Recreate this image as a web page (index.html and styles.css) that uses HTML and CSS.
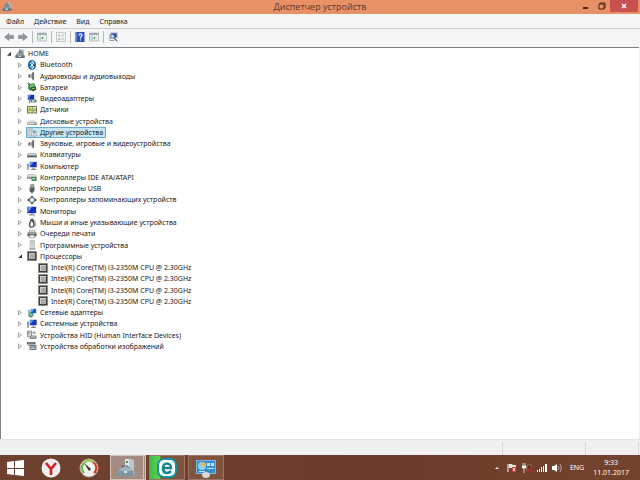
FILE: index.html
```html
<!DOCTYPE html>
<html lang="ru">
<head>
<meta charset="utf-8">
<title>Диспетчер устройств</title>
<link rel="stylesheet" href="styles.css">
</head>
<body>
<svg class="sprite" aria-hidden="true">
  <symbol id="pc" viewBox="0 0 20 20"><path d="M8 1h8l2 2v9H8z" fill="#b5babb"/><path d="M8 1h3v11H8z" fill="#80898a"/><path d="M12 4h4M12 7h4" stroke="#62696b"/><path d="M3 9h12l4 4v5H1v-5z" fill="#8c9799"/><path d="M1 13h18v5H1z" fill="#69777a"/><path d="M7 13h5v3H7z" fill="#c8d0d0"/><path d="M5 9l2-3h5l2 3" fill="none" stroke="#4e5b5f" stroke-width="1.5"/></symbol>
  <symbol id="bt" viewBox="0 0 20 20"><ellipse cx="10" cy="10" rx="8" ry="10" fill="#1769a5"/><path d="M6 6l8 8-4 4V2l4 4-8 8" fill="none" stroke="#fff" stroke-width="1.7"/></symbol>
  <symbol id="audio" viewBox="0 0 20 20"><path d="M3 7h4l7-6v18l-7-6H3z" fill="#a9a9a9"/><path d="M10 4l4-3v18l-4-3z" fill="#727272"/><path d="M3 7h3v6H3z" fill="#666"/><path d="M16 5v10" stroke="#ccc"/></symbol>
  <symbol id="battery" viewBox="0 0 20 20"><path d="M3 5l11-3 4 9-11 7-5-5z" fill="#36844b"/><path d="M5 6l8-2 2 4-9 3z" fill="#7dbd6e"/><path d="M8 12l9-3 2 6-8 4z" fill="#234b32"/><path d="M1 3l4 3M3 1l3 4" stroke="#555" stroke-width="2"/><path d="M10 14l6-2" stroke="#b3d45b" stroke-width="2"/></symbol>
  <symbol id="video" viewBox="0 0 20 20"><path d="M1 1h14v11H1z" fill="#9ba8c9"/><path d="M2 2h12v9H2z" fill="#1930b4"/><path d="M2 2h6l-4 6H2z" fill="#6687e3"/><path d="M7 11h12v6H7z" fill="#55886b"/><path d="M10 12h5v4h-5z" fill="#bcd0c1"/><path d="M5 9v10" stroke="#888" stroke-width="2"/></symbol>
  <symbol id="sensor" viewBox="0 0 20 20"><path d="M0 2h20v15H0z" fill="#6e7968"/><path d="M2 4h9v11H2z" fill="#d3df74"/><path d="M12 4h6v5h-6zM12 11h6v4h-6z" fill="#d8dfa5"/><path d="M3 12l3-5 3 4" fill="none" stroke="#597127" stroke-width="1.5"/></symbol>
  <symbol id="disk" viewBox="0 0 20 20"><path d="M4 9h12l4 5H0z" fill="#d5d5d5"/><path d="M0 13h20v5H0z" fill="#a0a4a4"/><path d="M1 14h18v2H1z" fill="#d2d5d5"/><path d="M15 15h3v2h-3z" fill="#467c54"/></symbol>
  <symbol id="unknown" viewBox="0 0 20 20"><path d="M2 1h8v17H2z" fill="#d7dddd" stroke="#808b8e"/><path d="M4 4h4M4 7h4" stroke="#8d9799"/><circle cx="14" cy="13" r="6" fill="#dce7ed" stroke="#75858e"/><path d="M12 11c0-3 5-2 4 0l-2 2v1M14 16v1" fill="none" stroke="#344e64" stroke-width="1.7"/></symbol>
  <symbol id="keyboard" viewBox="0 0 20 20"><path d="M3 6h14l3 3v6H0V9z" fill="#8c9190"/><path d="M3 7h14l2 3H1z" fill="#d4d8d6"/><path d="M2 13h16" stroke="#555c5a" stroke-width="2"/></symbol>
  <symbol id="computer" viewBox="0 0 20 20"><path d="M5 1h15v12H5z" fill="#9aabd1"/><path d="M6 2h13v10H6z" fill="#1935b9"/><path d="M6 2h7L8 9H6z" fill="#6c91e8"/><path d="M11 13h4v3h3v2H8v-2h3z" fill="#888"/><path d="M0 5h4v13H0z" fill="#a2abb4"/><path d="M1 8h2" stroke="#496078" stroke-width="2"/></symbol>
  <symbol id="ide" viewBox="0 0 20 20"><path d="M3 4h12l4 4v6H0V8z" fill="#9da3a2"/><path d="M3 5h12l3 4H1z" fill="#dfe2e2"/><path d="M9 10h10v8H9z" fill="#3f8857"/><path d="M11 12h5v3h-5z" fill="#b7d2bd"/></symbol>
  <symbol id="usb" viewBox="0 0 20 20"><path d="M7 1h7v6H7z" fill="#a6a6a6" stroke="#696969"/><path d="M5 7h10v6l-3 4H8l-3-3z" fill="#565a5b"/><path d="M10 16v4" stroke="#777" stroke-width="2"/><path d="M7 8v5" stroke="#aaa"/></symbol>
  <symbol id="storage" viewBox="0 0 20 20"><path d="M10 1l4 4H6zM10 19l-4-4h8zM0 10l5-4v8zM20 10l-5 4V6z" fill="#4b5052"/><circle cx="10" cy="10" r="5" fill="#f1f1f1" stroke="#5b6062" stroke-width="2"/></symbol>
  <symbol id="monitor" viewBox="0 0 20 20"><path d="M0 1h19v14H0z" fill="#a4b2d2"/><path d="M1 2h17v12H1z" fill="#1530bb"/><path d="M1 2h9L4 11H1z" fill="#6a91ec"/><path d="M8 15h4v2h4v2H4v-2h4z" fill="#7e8590"/></symbol>
  <symbol id="mouse" viewBox="0 0 20 20"><path d="M5 18C1 14 6 7 7 2l5-1c2 5 5 11 3 16-2 3-8 4-10 1z" fill="#53585a"/><path d="M7 16c-2-2 1-7 2-10 3 3 5 8 3 10-1 2-4 2-5 0z" fill="#eee"/><path d="M15 4l3 12" stroke="#92989a" stroke-width="2"/></symbol>
  <symbol id="printer" viewBox="0 0 20 20"><path d="M5 2h11v6H5z" fill="#d9dada" stroke="#848a8b"/><path d="M1 7h18v8H1z" fill="#565e60"/><path d="M3 9h14" stroke="#a9b0b1" stroke-width="2"/><path d="M5 12h10v6H5z" fill="#e9eaea" stroke="#767c7d"/></symbol>
  <symbol id="software" viewBox="0 0 20 20"><path d="M6 1h9v17H6z" fill="#d6d9d9" stroke="#a2a7a7"/><path d="M8 4h5M8 7h5" stroke="#9ca2a2"/><path d="M5 18h12" stroke="#888" stroke-width="2"/></symbol>
  <symbol id="cpu" viewBox="0 0 20 20"><path d="M1 1h18v18H1z" fill="#42413c"/><path d="M1 1h18v18H1z" fill="none" stroke="#777166" stroke-width="2" stroke-dasharray="1 1"/><path d="M4 4h12v12H4z" fill="#aaa9a6"/><path d="M4 4h12v2H6v10H4z" fill="#d0d0cc"/></symbol>
  <symbol id="network" viewBox="0 0 20 20"><path d="M2 4h11v9H2z" fill="#8db0d0"/><path d="M7 1h12v10H7z" fill="#abc4dc"/><path d="M8 2h10v8H8z" fill="#1b58bd"/><path d="M8 2h6l-4 6H8z" fill="#67afe6"/><circle cx="8" cy="14" r="5" fill="#409578"/><path d="M5 12l4 1 2 4" fill="none" stroke="#bbe0a3" stroke-width="2"/></symbol>
  <symbol id="hid" viewBox="0 0 20 20"><path d="M1 2h8v12H1z" fill="#e1e5e5" stroke="#677174" stroke-width="1.5"/><path d="M11 3h6v5h-6z" fill="#9ca7aa"/><path d="M6 11h13v7H6z" fill="#7d898c"/><path d="M8 13h9M8 16h9" stroke="#d9dfdf"/><path d="M4 4v5" stroke="#657073" stroke-width="2"/></symbol>
  <symbol id="imaging" viewBox="0 0 20 20"><path d="M0 2h17v5H0z" fill="#5d6668"/><path d="M2 4h13" stroke="#b9c1c2"/><path d="M5 8h14v10H5z" fill="#727c7f"/><path d="M7 12h10M7 15h10" stroke="#d3dadc" stroke-width="1.5"/><path d="M2 9h4" stroke="#999" stroke-width="2"/></symbol>
  <symbol id="back" viewBox="0 0 20 16"><path d="M1 8l9-7v4h9v6h-9v4z" fill="#939697" stroke="#777b7d"/></symbol>
  <symbol id="panel" viewBox="0 0 20 18"><path d="M1 1h18v16H1z" fill="#f5f7f5" stroke="#899097"/><path d="M1 1h18v4H1z" fill="#a4adb2"/><path d="M7 5v12M14 5v12M1 8h6M1 11h6M1 14h6" stroke="#a5adb0"/><path d="M8 11l4-3v6z" fill="#36a34e"/></symbol>
  <symbol id="props" viewBox="0 0 20 20"><path d="M1 1h18v18H1z" fill="#f2f4f2" stroke="#989da0"/><path d="M4 5h5v4H4zM4 12h5v4H4z" fill="#bac7bc"/><path d="M11 5h5M11 8h5M11 12h5M11 15h5" stroke="#a0a7ad"/></symbol>
  <symbol id="help" viewBox="0 0 18 20"><path d="M0 0h18v20H0z" fill="#2d50b8"/><path d="M0 0h3v20H0z" fill="#5f83d9"/><path d="M7 7c0-5 7-4 6 0-1 2-3 2-3 6M10 15v2" fill="none" stroke="#fff" stroke-width="2.3"/></symbol>
  <symbol id="scan" viewBox="0 0 20 20"><path d="M5 1h14v11H5z" fill="#9eabc8"/><path d="M7 3h10v8H7z" fill="#243da9"/><path d="M2 4h4v11H2z" fill="#b9bec5"/><circle cx="9" cy="9" r="4" fill="#bbd3ee" stroke="#59708e" stroke-width="1.5"/><path d="M12 12l6 6" stroke="#57616c" stroke-width="2.5"/><path d="M3 17h9" stroke="#999" stroke-width="2"/></symbol>
</svg>

<main class="window">
  <header class="titlebar">
    <svg class="icon app-icon"><use href="#pc"/></svg>
    <h1>Диспетчер устройств</h1>
    <div class="window-controls">
      <button aria-label="Свернуть"><svg viewBox="0 0 8 8"><path d="M2 5h5v2H2z"/></svg></button>
      <button aria-label="Восстановить"><svg viewBox="0 0 8 8"><path d="M2 2V1h5v5H6M1 2h5v5H1z" fill="none" stroke="#43281d"/></svg></button>
      <button class="close" aria-label="Закрыть"><svg viewBox="0 0 8 8"><path d="M2 2l4 4M6 2L2 6" stroke="#fff" stroke-width="1.4"/></svg></button>
    </div>
  </header>
  <nav class="menu"><button>Файл</button><button>Действие</button><button>Вид</button><button>Справка</button></nav>
  <div class="toolbar">
    <button aria-label="Назад"><svg class="icon"><use href="#back"/></svg></button>
    <button aria-label="Вперёд" class="forward"><svg class="icon"><use href="#back"/></svg></button>
    <i class="separator"></i>
    <button aria-label="Дерево консоли"><svg class="icon"><use href="#panel"/></svg></button>
    <i class="separator"></i>
    <button aria-label="Свойства"><svg class="icon"><use href="#props"/></svg></button>
    <i class="separator"></i>
    <button aria-label="Справка"><svg class="icon"><use href="#help"/></svg></button>
    <button aria-label="Область действий"><svg class="icon"><use href="#panel"/></svg></button>
    <i class="separator"></i>
    <button aria-label="Обновить конфигурацию"><svg class="icon"><use href="#scan"/></svg></button>
  </div>

  <section class="content">
    <ul class="tree" role="tree">
      <li class="root open" role="treeitem"><i class="twisty"></i><span class="item"><svg class="icon"><use href="#pc"/></svg>HOME</span></li>
      <li role="treeitem"><i class="twisty"></i><span class="item"><svg class="icon"><use href="#bt"/></svg>Bluetooth</span></li>
      <li role="treeitem"><i class="twisty"></i><span class="item"><svg class="icon"><use href="#audio"/></svg>Аудиовходы и аудиовыходы</span></li>
      <li role="treeitem"><i class="twisty"></i><span class="item"><svg class="icon"><use href="#battery"/></svg>Батареи</span></li>
      <li role="treeitem"><i class="twisty"></i><span class="item"><svg class="icon"><use href="#video"/></svg>Видеоадаптеры</span></li>
      <li role="treeitem"><i class="twisty"></i><span class="item"><svg class="icon"><use href="#sensor"/></svg>Датчики</span></li>
      <li role="treeitem"><i class="twisty"></i><span class="item"><svg class="icon"><use href="#disk"/></svg>Дисковые устройства</span></li>
      <li role="treeitem" aria-selected="true"><i class="twisty"></i><span class="item"><svg class="icon"><use href="#unknown"/></svg>Другие устройства</span></li>
      <li role="treeitem"><i class="twisty"></i><span class="item"><svg class="icon"><use href="#audio"/></svg>Звуковые, игровые и видеоустройства</span></li>
      <li role="treeitem"><i class="twisty"></i><span class="item"><svg class="icon"><use href="#keyboard"/></svg>Клавиатуры</span></li>
      <li role="treeitem"><i class="twisty"></i><span class="item"><svg class="icon"><use href="#computer"/></svg>Компьютер</span></li>
      <li role="treeitem"><i class="twisty"></i><span class="item"><svg class="icon"><use href="#ide"/></svg>Контроллеры IDE ATA/ATAPI</span></li>
      <li role="treeitem"><i class="twisty"></i><span class="item"><svg class="icon"><use href="#usb"/></svg>Контроллеры USB</span></li>
      <li role="treeitem"><i class="twisty"></i><span class="item"><svg class="icon"><use href="#storage"/></svg>Контроллеры запоминающих устройств</span></li>
      <li role="treeitem"><i class="twisty"></i><span class="item"><svg class="icon"><use href="#monitor"/></svg>Мониторы</span></li>
      <li role="treeitem"><i class="twisty"></i><span class="item"><svg class="icon"><use href="#mouse"/></svg>Мыши и иные указывающие устройства</span></li>
      <li role="treeitem"><i class="twisty"></i><span class="item"><svg class="icon"><use href="#printer"/></svg>Очереди печати</span></li>
      <li role="treeitem"><i class="twisty"></i><span class="item"><svg class="icon"><use href="#software"/></svg>Программные устройства</span></li>
      <li class="open" role="treeitem"><i class="twisty"></i><span class="item"><svg class="icon"><use href="#cpu"/></svg>Процессоры</span></li>
      <li class="leaf" role="treeitem"><span class="item"><svg class="icon"><use href="#cpu"/></svg>Intel(R) Core(TM) i3-2350M CPU @ 2.30GHz</span></li>
      <li class="leaf" role="treeitem"><span class="item"><svg class="icon"><use href="#cpu"/></svg>Intel(R) Core(TM) i3-2350M CPU @ 2.30GHz</span></li>
      <li class="leaf" role="treeitem"><span class="item"><svg class="icon"><use href="#cpu"/></svg>Intel(R) Core(TM) i3-2350M CPU @ 2.30GHz</span></li>
      <li class="leaf" role="treeitem"><span class="item"><svg class="icon"><use href="#cpu"/></svg>Intel(R) Core(TM) i3-2350M CPU @ 2.30GHz</span></li>
      <li role="treeitem"><i class="twisty"></i><span class="item"><svg class="icon"><use href="#network"/></svg>Сетевые адаптеры</span></li>
      <li role="treeitem"><i class="twisty"></i><span class="item"><svg class="icon"><use href="#computer"/></svg>Системные устройства</span></li>
      <li role="treeitem"><i class="twisty"></i><span class="item"><svg class="icon"><use href="#hid"/></svg>Устройства HID (Human Interface Devices)</span></li>
      <li role="treeitem"><i class="twisty"></i><span class="item"><svg class="icon"><use href="#imaging"/></svg>Устройства обработки изображений</span></li>
    </ul>
  </section>
  <footer class="statusbar"><span class="wide"></span><span class="mid"></span><span class="narrow"></span></footer>
</main>

<footer class="taskbar">
  <button class="start" aria-label="Пуск"><svg viewBox="0 0 17 16"><path d="M0 2l7-1v7H0zM8 1l9-1v8H8zM0 9h7v6l-7-1zM8 9h9v7l-9-1z" fill="#fff"/></svg></button>
  <button class="pin" aria-label="Яндекс"><svg viewBox="0 0 20 20"><circle cx="10" cy="10" r="9.5" fill="#eee"/><path d="M5 5l5 6v6M15 5l-5 6" fill="none" stroke="#d81e25" stroke-width="2.6"/></svg></button>
  <button class="pin" aria-label="Монитор скорости"><svg viewBox="0 0 20 20"><circle cx="10" cy="10" r="9" fill="#f1f1ec" stroke="#b1aaa4"/><path d="M5 15a7 7 0 0 1 0-10" fill="none" stroke="#63b63b" stroke-width="2"/><path d="M5 5a7 7 0 0 1 9 -1" fill="none" stroke="#93c43b" stroke-width="2"/><path d="M14 4a7 7 0 0 1 1 11" fill="none" stroke="#d5352c" stroke-width="2"/><path d="M5 5l7 6-2 2z" fill="#333"/></svg></button>
  <div class="tasks">
    <button class="task active" aria-label="Диспетчер устройств"><svg viewBox="0 0 20 20"><path d="M8 1h7l2 2v11H8z" fill="#bdc8ce"/><path d="M8 1h4v8H8z" fill="#e3e8e8"/><path d="M9 3h2v2H9z" fill="#4b8a5d"/><path d="M2 12l3-3h8l4 4v5H1z" fill="#a3b6c0"/><path d="M1 13h15v5H1z" fill="#7b95a3"/><path d="M5 10V8h6v2" fill="none" stroke="#536975"/><path d="M7 13h3v2H7z" fill="#d8e2e6"/><path d="M17 14h2v2h-2z" fill="#8c9da6"/></svg></button>
    <button class="task progress" aria-label="Браузер"><svg viewBox="0 0 20 20"><rect x="0" y="0" width="20" height="20" rx="7" fill="#14939a"/><rect x="2" y="2" width="16" height="16" rx="5" fill="#fff"/><path d="M6 10h8c0-6-8-6-8 0s5 6 8 3" fill="none" stroke="#14858c" stroke-width="2.6"/></svg></button>
    <button class="task" aria-label="Панель управления"><svg viewBox="0 0 20 20"><path d="M0 2h20v14H0z" fill="#78b9e4"/><path d="M1 3h18v12H1z" fill="#378dcc"/><circle cx="6" cy="8" r="4" fill="#8dd0ef"/><path d="M6 8V4a4 4 0 0 1 4 4z" fill="#f1b04c"/><path d="M11 5h3v3h-3zM15 5h3v3h-3zM11 10h7v1h-7zM3 13h6v1H3z" fill="#c6e5f6"/><ellipse cx="10" cy="17" rx="4" ry="3" fill="#d6d9d9"/></svg></button>
  </div>
  <div class="tray">
    <button aria-label="Скрытые значки"><svg viewBox="0 0 10 10"><path d="M3 6l2-2 2 2z" fill="#fff"/></svg></button>
    <button aria-label="Центр поддержки"><svg viewBox="0 0 10 10"><path d="M1 1v8" stroke="#fff"/><path d="M2 1h3l1 1h3v4H6L5 5H2z" fill="#e9e3df"/><path d="M5 4h4v5H5z" fill="#cf3733"/><path d="M6 5l2 3M8 5L6 8" stroke="#fff"/></svg></button>
    <button aria-label="Питание"><svg viewBox="0 0 10 10"><path d="M1 0v3M3 0v3M0 3h4v2H0zM2 5v5" fill="#fff" stroke="#fff" stroke-width=".7"/><path d="M5 2h4v5H5z" fill="#49291f" stroke="#a78d80" stroke-width=".7"/><path d="M6 5l4 4M10 5L6 9" stroke="#b82226" stroke-width="1.3"/></svg></button>
    <button aria-label="Сеть"><svg viewBox="0 0 10 10"><path d="M0 7h1v2H0zM2 6h1v3H2zM4 4h1v5H4zM6 3h1v6H6zM8 1h2v8H8z" fill="#fff"/></svg></button>
    <button aria-label="Громкость"><svg viewBox="0 0 10 10"><path d="M0 3h2l3-2v8L2 7H0z" fill="#fff"/><path d="M6 3q2 2 0 4M8 1q3 4 0 8" fill="none" stroke="#bba69b"/></svg></button>
    <span class="language">ENG</span>
    <time class="clock" datetime="2017-01-11T09:33"><span>9:33</span><span>11.01.2017</span></time>
  </div>
</footer>
</body>
</html>
```
FILE: styles.css
```css
* { box-sizing: border-box; }
body {
  margin: 0;
  min-height: 100vh;
  display: flex;
  flex-direction: column;
  font: 7px/11px "Noto Sans", "Open Sans", sans-serif;
  color: #222;
  background: #f0f0f0;
}
button { display: flex; align-items: center; justify-content: center; margin: 0; padding: 0; border: 0; background: none; font: inherit; color: inherit; }
.sprite { position: absolute; width: 0; height: 0; }
.icon { width: 10px; height: 10px; flex: none; }
.window { flex: 1; display: flex; flex-direction: column; }
.titlebar {
  display: grid;
  grid-template-columns: 1fr auto 1fr;
  align-items: center;
  height: 14px;
  padding: 0 2px;
  background: #e99166;
  color: #5b3626;
}
.titlebar h1 { margin: 0; font: 400 9px/14px "Open Sans", "Noto Sans", sans-serif; }
.window-controls { display: flex; justify-content: flex-end; align-self: start; }
.window-controls button { width: 17px; height: 12px; }
.window-controls svg { width: 8px; height: 8px; fill: #43281d; }
.window-controls .close { width: 28px; background: #c9504f; }
.menu {
  display: flex;
  gap: 10px;
  height: 15px;
  padding: 0 6px;
  background: #f5f6f8;
  border-bottom: 1px solid #c9cbcd;
}
.toolbar {
  display: flex;
  align-items: center;
  gap: 4px;
  height: 18px;
  padding: 0 4px 2px;
  background: #f4f6f7;
}
.forward svg { transform: scaleX(-1); }
.separator { width: 1px; height: 12px; background: #b5b7b9; }
.content {
  flex: 1;
  margin-right: 1px;
  padding: 0 6px;
  background: #fff;
  border-top: 1px solid #7d7f81;
  border-left: 1px solid #7d7f81;
}
.tree {
  display: grid;
  grid-auto-rows: 1fr;
  min-height: 304px;
  margin: 0;
  padding: 0;
  list-style: none;
}
.tree li { display: flex; align-items: center; gap: 3px; padding-left: 11px; white-space: nowrap; }
.tree .root { padding-left: 0; }
.tree .leaf { padding-left: 30px; }
.item { display: flex; align-items: center; gap: 3px; padding: 0 1px; }
[aria-selected="true"] .item { background: #c4e6f5; outline: 1px solid #62afd0; outline-offset: -1px; padding-right: 3px; }
.twisty { width: 4px; height: 6px; margin-right: 1px; background: #a9a9a9; clip-path: polygon(0 0, 100% 50%, 0 100%, 0 80%, 60% 50%, 25% 25%, 25% 80%, 0 100%); }
.open .twisty { height: 4px; background: #333; clip-path: polygon(100% 0, 100% 100%, 0 100%); }
.root .twisty { margin-right: 0; }
.statusbar { display: flex; height: 16px; padding-top: 2px; background: #f0f0f0; border-top: 1px solid #e4e4e4; }
.statusbar span { border-right: 1px solid #d7d7d7; }
.wide { flex: 1; }
.mid { width: 83px; }
.narrow { width: 53px; margin-right: 1px; }
.taskbar {
  display: flex;
  align-items: center;
  height: 25px;
  padding: 0 11px 0 7px;
  background: linear-gradient(90deg, #6e422e, #6b3c29 60%, #74432d);
  color: #fff;
}
.start svg { width: 17px; height: 16px; }
.pin { margin-left: 17px; }
.pin svg { width: 20px; height: 20px; }
.pin + .pin { margin-left: 18px; }
.tasks { display: flex; gap: 3px; margin-left: 11px; }
.task { width: 36px; height: 25px; background: #80533f; border: 1px solid #9c7767; }
.task svg { width: 20px; height: 20px; }
.task.active { background: #a58c80; border-color: #d2c3ba; border-right: 3px double #d2c3ba; }
.task.progress { background: linear-gradient(90deg, #45ba4d, #55d64d 28%, #80533f 32%); }
.tray { display: flex; align-items: center; gap: 5px; margin-left: auto; }
.tray svg { width: 10px; height: 10px; }
.language { margin: 0 4px 0 3px; }
.clock { display: flex; flex-direction: column; text-align: center; line-height: 10px; }
```
